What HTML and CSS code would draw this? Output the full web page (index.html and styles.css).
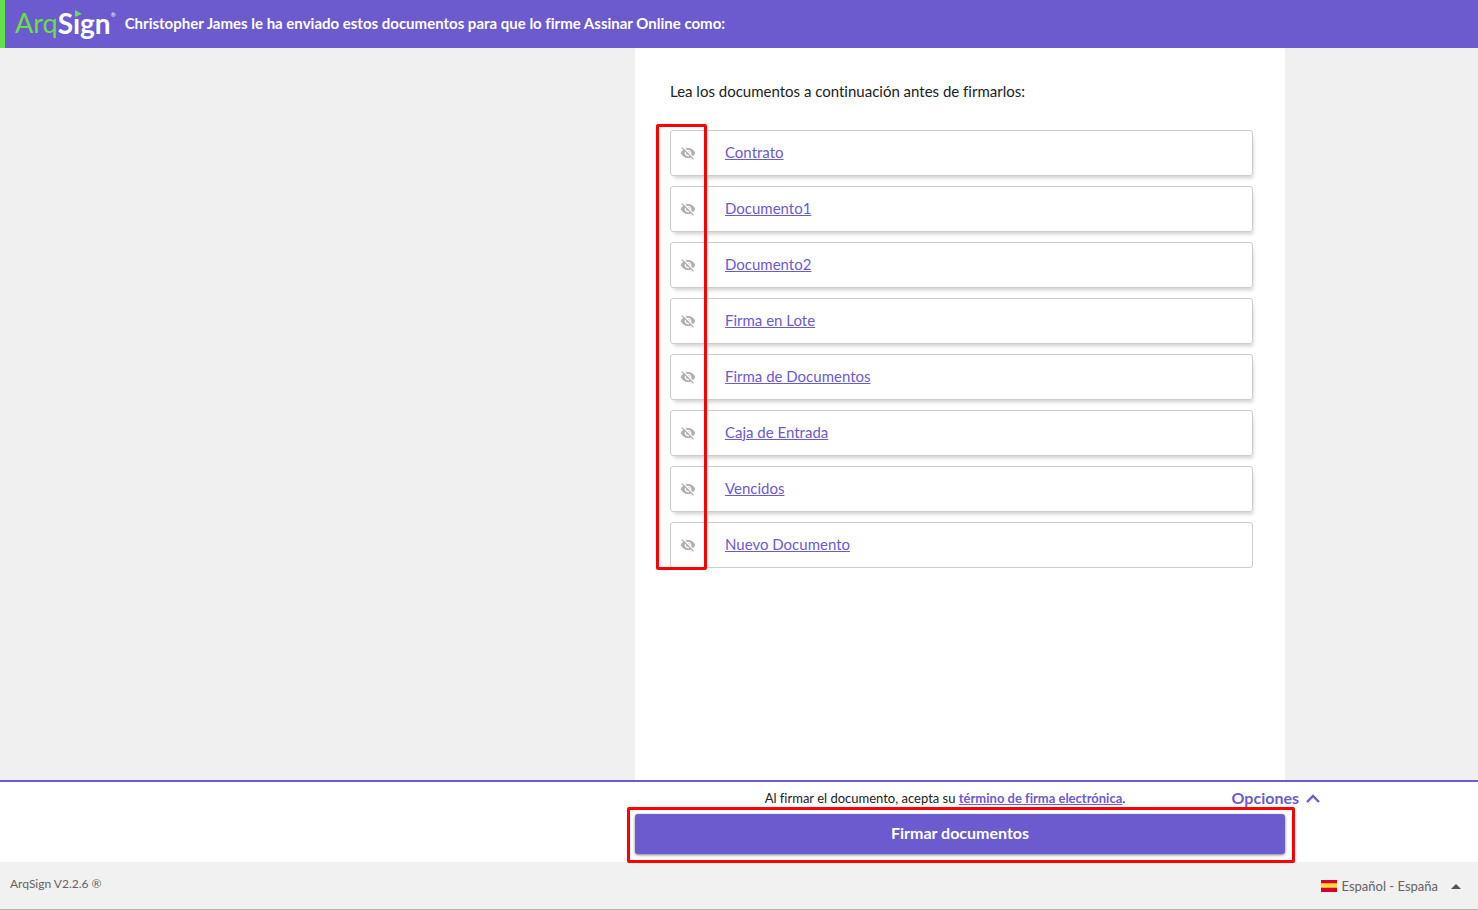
FILE: index.html
```html
<!DOCTYPE html>
<html lang="es">
<head>
<meta charset="utf-8">
<meta name="viewport" content="width=device-width, initial-scale=1">
<title>ArqSign</title>
<link rel="stylesheet" href="styles.css">
</head>
<body>
<svg width="0" height="0" class="sprite" aria-hidden="true">
  <symbol id="eye-off" viewBox="0 0 24 24"><path d="M12 7c2.76 0 5 2.24 5 5 0 .65-.13 1.26-.36 1.83l2.92 2.92c1.51-1.26 2.7-2.89 3.43-4.75-1.73-4.39-6-7.5-11-7.5-1.4 0-2.74.25-3.98.7l2.16 2.16C10.74 7.13 11.35 7 12 7zM2 4.27l2.28 2.28.46.46C3.08 8.3 1.78 10.02 1 12c1.73 4.39 6 7.500 11 7.500 1.550 0 3.030-.3 4.380-.84l.42.42L19.730 22 21 20.730 3.270 3 2 4.270zM7.530 9.800l1.550 1.550c-.05.21-.08.43-.08.65 0 1.660 1.340 3 3 3 .22 0 .44-.03.65-.08l1.550 1.550c-.67.33-1.410.53-2.200.53-2.760 0-5-2.240-5-5 0-.79.2-1.530.53-2.200zm4.310-.78l3.150 3.150.02-.16c0-1.660-1.340-3-3-3l-.17.010z"/></symbol>
</svg>
<header class="topbar">
  <div class="logo"><span class="logo-arq">Arq</span><span class="logo-sign">Sign<svg class="logo-flag" viewBox="0 0 9 8" aria-hidden="true"><path class="logo-patch" d="M0 0h9v8H0z"/><path class="logo-play" d="M1 0l7 4-7 3z"/></svg></span><sup class="logo-mark">®</sup></div>
  <h1 class="topbar-title">Christopher James le ha enviado estos documentos para que lo firme Assinar Online como:</h1>
</header>
<main class="columns">
  <section class="panel">
    <p class="intro">Lea los documentos a continuación antes de firmarlos:</p>
    <div class="docs-wrap">
      <ul class="docs">
        <li class="doc"><svg class="eye"><use href="#eye-off"/></svg><a href="#">Contrato</a></li>
        <li class="doc"><svg class="eye"><use href="#eye-off"/></svg><a href="#">Documento1</a></li>
        <li class="doc"><svg class="eye"><use href="#eye-off"/></svg><a href="#">Documento2</a></li>
        <li class="doc"><svg class="eye"><use href="#eye-off"/></svg><a href="#">Firma en Lote</a></li>
        <li class="doc"><svg class="eye"><use href="#eye-off"/></svg><a href="#">Firma de Documentos</a></li>
        <li class="doc"><svg class="eye"><use href="#eye-off"/></svg><a href="#">Caja de Entrada</a></li>
        <li class="doc"><svg class="eye"><use href="#eye-off"/></svg><a href="#">Vencidos</a></li>
        <li class="doc"><svg class="eye"><use href="#eye-off"/></svg><a href="#">Nuevo Documento</a></li>
      </ul>
      <div class="highlight highlight-eyes"></div>
    </div>
  </section>
</main>
<section class="actions columns">
  <div class="actions-body">
    <div class="terms-row">
      <p class="terms">Al firmar el documento, acepta su <a href="#">término de firma electrónica</a>.</p>
      <button class="options" type="button">Opciones <svg class="chevron" viewBox="0 0 14 9" aria-hidden="true"><path d="M1 8l6-6 6 6"/></svg></button>
    </div>
    <div class="sign-wrap">
      <button class="sign" type="button">Firmar documentos</button>
      <div class="highlight highlight-sign"></div>
    </div>
  </div>
</section>
<footer class="footer">
  <span class="version">ArqSign V2.2.6 ®</span>
  <button class="language" type="button"><svg class="flag" viewBox="0 0 16 12" aria-hidden="true"><path fill="#d80027" d="M0 0h16v12H0z"/><path fill="#ffda44" d="M0 4h16v4H0z"/><path fill="#f3a52e" d="M0 3h16v1H0zM0 7h16v1H0z"/></svg><span>Español - España</span><svg class="caret" viewBox="0 0 10 5" aria-hidden="true"><path d="M0 5l5-5 5 5z"/></svg></button>
</footer>
</body>
</html>
```
FILE: styles.css
```css
* { box-sizing: border-box; }
body {
  margin: 0;
  min-height: 100vh;
  display: flex;
  flex-direction: column;
  background: #f0f0f0;
  color: #212121;
  font-family: Lato, "Open Sans", sans-serif;
  font-size: 15px;
  line-height: 20px;
  font-variant-ligatures: none;
}
h1, p, ul { margin: 0; padding: 0; }
button { border: 0; padding: 0; background: none; font: inherit; cursor: pointer; }
a { color: #6c5acf; text-underline-offset: 1px; }
.sprite { position: absolute; }

.topbar {
  display: flex;
  align-items: center;
  gap: 9px;
  height: 48px;
  padding: 0 10px 2px;
  border-left: 5px solid #67df4b;
  background: #6c5acf;
  color: #fff;
}
.logo { display: flex; align-items: center; font-size: 28px; line-height: 40px; }
.logo-arq { color: #67df4b; font-size: 27px; font-weight: 400; }
.logo-sign { position: relative; font-weight: 700; }
.logo-flag { position: absolute; left: 16px; top: 7px; width: 9px; height: 8px; }
.logo-patch { fill: #6c5acf; }
.logo-play { fill: #67df4b; }
.logo-mark { align-self: flex-start; font-size: 6px; line-height: 24px; }
.topbar-title { font-size: 15px; line-height: 20px; font-weight: 700; }

.columns {
  display: grid;
  grid-template-columns: minmax(0, 1fr) minmax(0, 650px) 193px;
}
.columns > * { grid-column: 2; }
main.columns { flex: 1; }
.panel { padding: 33px 32px 33px 35px; background: #fff; }
.intro { margin-bottom: 29px; }
.docs-wrap, .sign-wrap { position: relative; }
.docs { display: grid; gap: 10px; list-style: none; }
.doc {
  display: flex;
  align-items: center;
  gap: 29px;
  height: 46px;
  padding: 0 9px 3px;
  border: 1px solid #ccc;
  border-radius: 3px;
  box-shadow: 2px 4px 4px -2px rgba(0, 0, 0, .2);
  font-size: 15px;
}
.doc:last-child { box-shadow: none; }
.eye { width: 16px; height: 16px; margin-top: 3px; fill: #b0b0b0; }
.highlight {
  position: absolute;
  border: 3px solid #fe0000;
  border-radius: 2px;
  pointer-events: none;
}
.highlight-eyes { left: -14px; top: -6px; bottom: -2px; width: 51px; }

.actions { border-top: 2px solid #6c5acf; background: #fff; }
.actions-body { padding: 6px 0 8px; }
.terms-row { position: relative; margin-bottom: 6px; }
.terms { padding-right: 30px; text-align: center; font-size: 13px; line-height: 20px; }
.terms a { font-weight: 700; }
.options {
  position: absolute;
  right: -35px;
  top: 0;
  display: flex;
  align-items: center;
  gap: 7px;
  color: #6c5acf;
  font-size: 16px;
  font-weight: 700;
  line-height: 20px;
}
.chevron { width: 14px; height: 9px; fill: none; stroke: #6c5acf; stroke-width: 2.4; }
.sign {
  display: block;
  width: 100%;
  height: 40px;
  padding-bottom: 2px;
  border-radius: 3px;
  background: #6c5acf;
  box-shadow: 0 1px 3px rgba(0, 0, 0, .5);
  color: #fff;
  font-size: 16px;
  font-weight: 700;
}
.highlight-sign { left: -8px; right: -10px; top: -7px; bottom: -9px; }

.footer {
  display: flex;
  align-items: center;
  justify-content: space-between;
  height: 48px;
  padding: 0 17px 0 10px;
  border-bottom: 1px solid #b0b2ac;
  background: #f1f1f1;
  color: #616161;
  font-size: 13px;
}
.version { padding-bottom: 3px; font-size: 12px; }
.language { display: flex; align-items: center; gap: 5px; padding-top: 1px; color: #616161; }
.flag { width: 16px; height: 12px; }
.caret { width: 10px; height: 5px; margin-left: 8px; fill: #555; }
```
